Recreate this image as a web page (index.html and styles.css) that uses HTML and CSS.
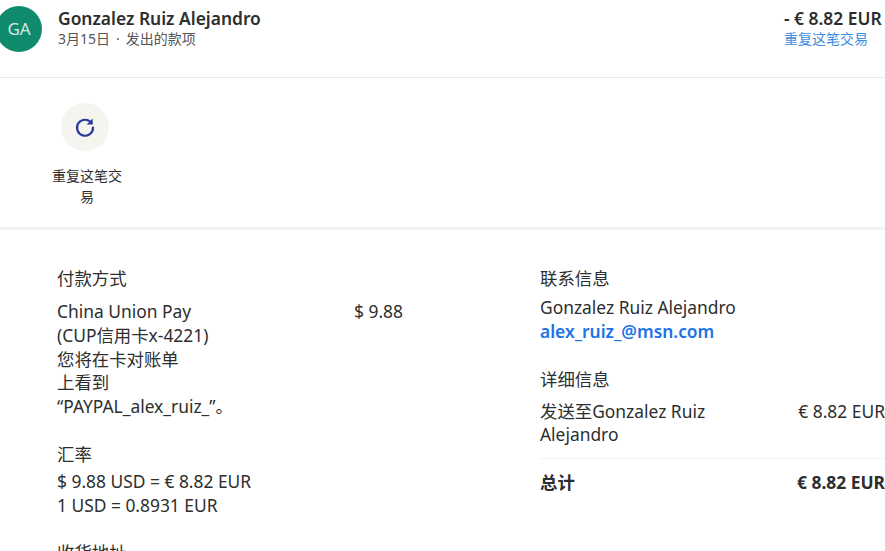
FILE: index.html
```html
<!DOCTYPE html>
<html lang="zh-CN">
<head>
  <meta charset="UTF-8" />
  <meta name="viewport" content="width=device-width, initial-scale=1.0"/>
  <title>交易详情</title>
  <link rel="stylesheet" href="styles.css">
</head>
<body>

<header class="summary">
  <div class="avatar">GA</div>
  <div class="summary-who">
    <div class="summary-name">Gonzalez Ruiz Alejandro</div>
    <div class="summary-sub">3月15日<span class="dot">·</span>发出的款项</div>
  </div>
  <div class="summary-amount">
    <div class="amount-total">- € 8.82 EUR</div>
    <a class="link" href="#">重复这笔交易</a>
  </div>
</header>

<section class="actions">
  <a class="action" href="#">
    <span class="action-icon">
      <svg width="24" height="24" viewBox="0 0 24 24" fill="none" stroke="#2a3a9e" stroke-width="2.2">
        <path d="M18.6 8.2A8 8 0 1 0 20 12.5" stroke-linecap="round"/>
        <path d="M19.6 3.4v6h-6z" fill="#2a3a9e" stroke="none"/>
      </svg>
    </span>
    <span class="action-label">重复这笔交易</span>
  </a>
</section>

<main class="details">
  <div class="col col-left">
    <div class="block">
      <h2 class="gap-wide">付款方式</h2>
      <div class="row">
        <div class="pay-text">China Union Pay<br>(CUP信用卡x-4221)<br>您将在卡对账单<br>上看到<br>“PAYPAL_alex_ruiz_”。</div>
        <div>$ 9.88</div>
      </div>
    </div>
    <div class="block">
      <h2 class="gap-tight">汇率</h2>
      <div>$ 9.88 USD = € 8.82 EUR<br>1 USD = 0.8931 EUR</div>
    </div>
    <div class="block">
      <h2>收货地址</h2>
    </div>
  </div>

  <div class="col col-right">
    <div class="block">
      <h2 class="gap-mid">联系信息</h2>
      <div>Gonzalez Ruiz Alejandro</div>
      <a class="email" href="#">alex_ruiz_@msn.com</a>
    </div>
    <div class="block">
      <h2>详细信息</h2>
      <div class="row row-line">
        <div class="send-text">发送至Gonzalez Ruiz Alejandro</div>
        <div>€ 8.82 EUR</div>
      </div>
      <div class="row row-total">
        <div>总计</div>
        <div>€ 8.82 EUR</div>
      </div>
    </div>
  </div>
</main>

</body>
</html>
```

FILE: styles.css
```css
html, body {
  height: 100%;
  overflow: hidden;
}

body {
  margin: 0;
  background: #fff;
  color: #2c2e2f;
  font-family: "Noto Sans", "Noto Sans CJK SC", sans-serif;
  font-size: 17.4px;
  line-height: 23.75px;
}

a {
  text-decoration: none;
}

.summary {
  display: flex;
  box-sizing: border-box;
  height: 78px;
  padding-top: 6px;
  border-bottom: 1px solid #e8e8e8;
}

.avatar {
  flex: none;
  width: 46px;
  height: 46px;
  margin-left: -4px;
  border-radius: 50%;
  background: #0f8a6d;
  color: #d5e8e3;
  font-size: 17px;
  line-height: 46px;
  text-align: center;
}

.summary-who {
  flex: 1;
  margin-left: 16px;
}

.summary-name {
  font-weight: 600;
  line-height: 24px;
}

.summary-sub {
  font-size: 14px;
  line-height: 18px;
  color: #555;
}

.dot {
  margin: 0 6px;
}

.summary-amount {
  flex: none;
  width: 101px;
}

.amount-total {
  font-weight: 600;
  line-height: 24px;
  white-space: nowrap;
}

.link {
  display: block;
  font-size: 14px;
  line-height: 18px;
  color: #3b8de0;
  white-space: nowrap;
}

.actions {
  box-sizing: border-box;
  height: 152px;
  padding: 25px 0 0 50px;
  border-bottom: 3px solid #f3f3f3;
}

.action {
  display: block;
  width: 74px;
  text-align: center;
  color: #2c2e2f;
}

.action-icon {
  display: flex;
  align-items: center;
  justify-content: center;
  width: 48px;
  height: 48px;
  margin: 0 0 14px 11px;
  border-radius: 50%;
  background: #f5f4ef;
}

.action-label {
  display: block;
  font-size: 14px;
  line-height: 21px;
}

.details {
  display: flex;
  padding: 36px 0 0 57px;
}

.col-left {
  flex: none;
  width: 346px;
}

.col-right {
  flex: none;
  width: 345px;
  margin-left: 137px;
}

.block {
  margin-bottom: 23px;
}

h2 {
  margin: 0 0 9px;
  font-size: 17.4px;
  font-weight: 400;
  line-height: 24px;
}

h2.gap-wide {
  margin-bottom: 10px;
}

h2.gap-mid {
  margin-bottom: 6px;
}

h2.gap-tight {
  margin-bottom: 4px;
}

.row {
  display: flex;
  justify-content: space-between;
}

.pay-text,
.send-text {
  width: 190px;
}

.email {
  display: block;
  font-weight: 600;
  color: #1a73e8;
}

.row-line {
  padding-bottom: 11px;
  margin-bottom: 12px;
  border-bottom: 1px solid #f2f2f2;
}

.row-total {
  font-weight: 700;
}
```
